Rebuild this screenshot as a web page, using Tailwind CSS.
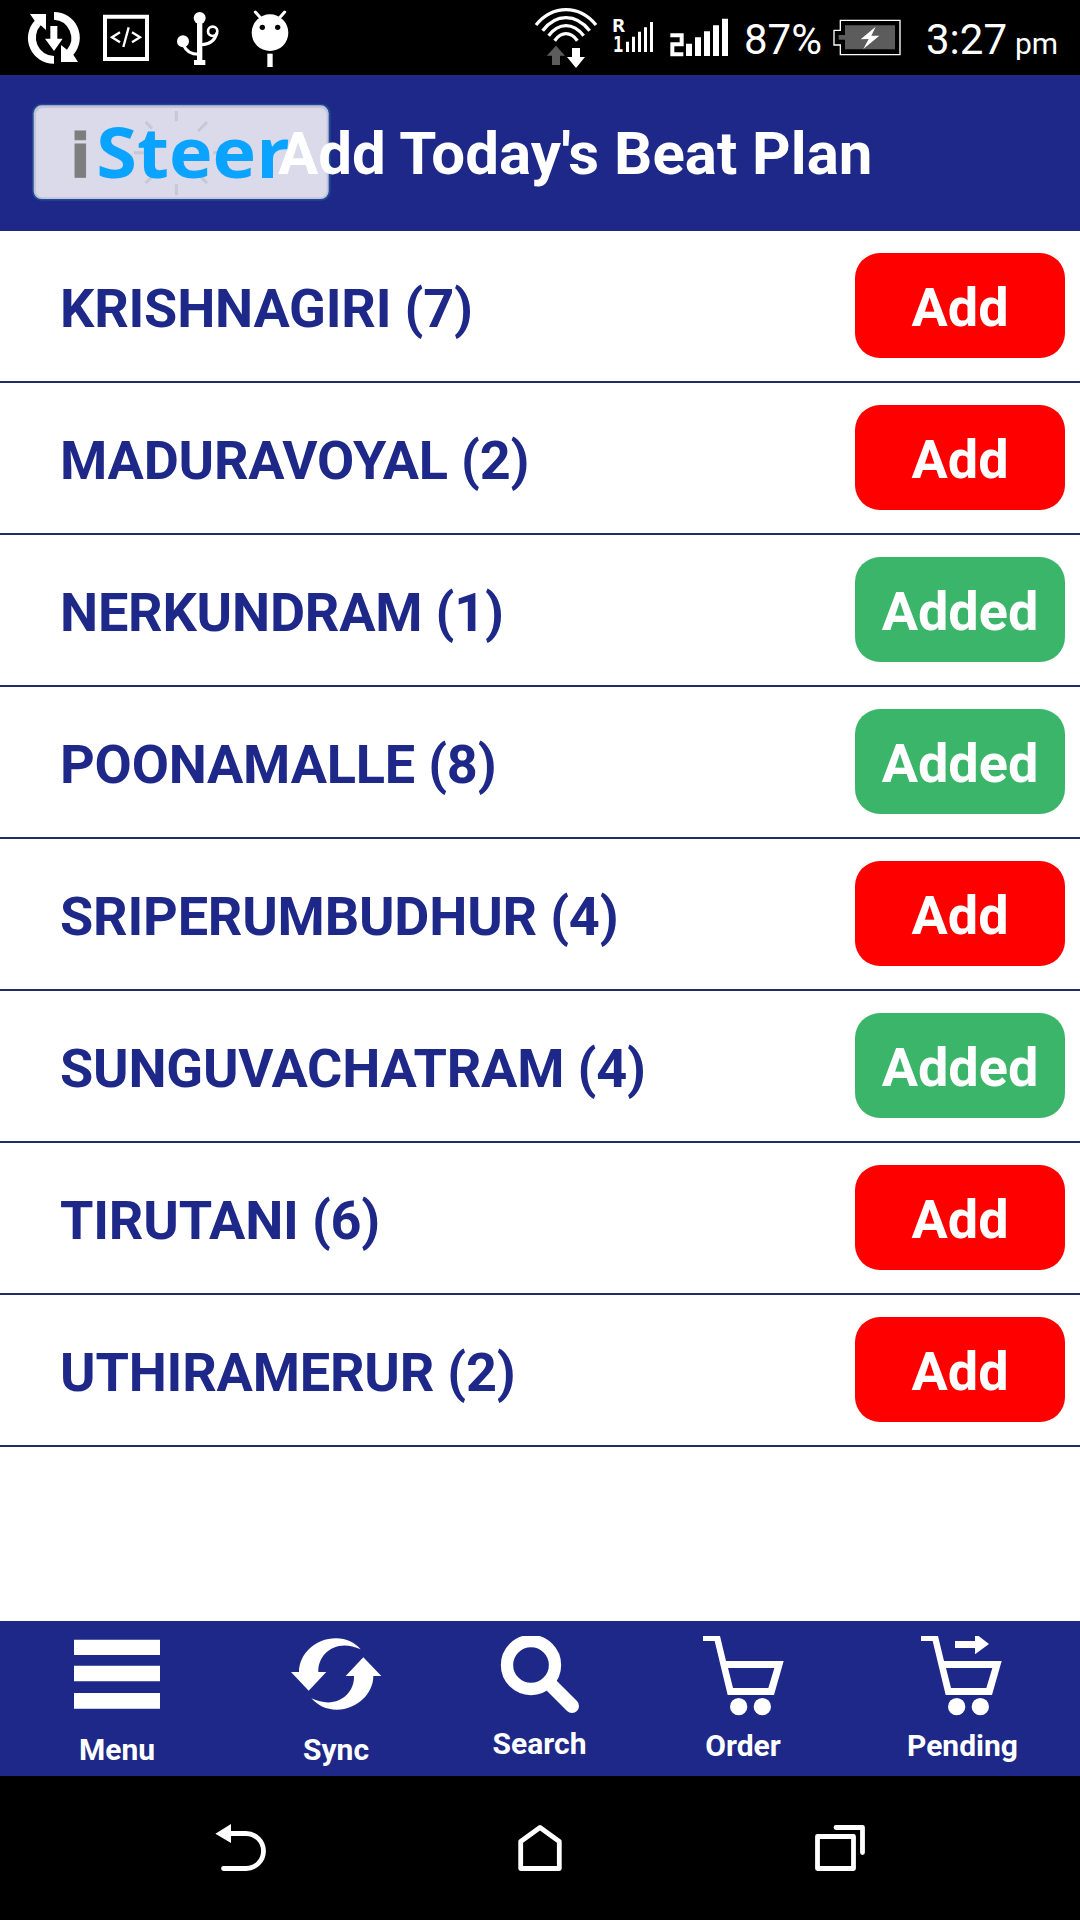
<!DOCTYPE html>
<html lang="en">
<head>
    <meta charset="UTF-8">
    <meta name="viewport" content="width=device-width, initial-scale=1.0">
    <title>Add Today's Beat Plan</title>
    <script src="https://cdn.jsdelivr.net/npm/@tailwindcss/browser@4"></script>
</head>
<body class="bg-white font-[Roboto,sans-serif]">
    <div class="w-[1080px] h-[1920px] flex flex-col overflow-hidden">
        <!-- Status bar -->
        <div class="h-[75px] shrink-0 bg-black text-white flex overflow-hidden">
            <svg class="w-[320px] h-[75px] shrink-0" viewBox="0 0 960 225" fill="#fff">
                <!-- download sync -->
                <path d="M162 36A77 77 0 0 1 220 164L234 186H183V135L201 149A55 55 0 0 0 162 59Z"/>
                <path d="M162 191A77 77 0 0 1 104 62L90 42H138V90L122 76A55 55 0 0 0 162 168Z"/>
                <path d="M151 78H172V116H188L162 153L135 116H151Z"/>
                <!-- code -->
                <path d="M315 50H441V177H315Z" fill="none" stroke="#fff" stroke-width="12"/>
                <path d="M360 97L336 112L360 127M396 97L420 112L396 127" fill="none" stroke="#fff" stroke-width="7"/>
                <path d="M386 82L370 141" fill="none" stroke="#fff" stroke-width="7"/>
                <!-- usb -->
                <circle cx="599" cy="54" r="18"/>
                <circle cx="549" cy="124" r="18"/>
                <path d="M591 60H607V180H616V195H582V180H591Z"/>
                <circle cx="638" cy="94" r="14" fill="none" stroke="#fff" stroke-width="8"/>
                <path d="M551 136Q563 164 598 163M604 134Q642 134 651 98" fill="none" stroke="#fff" stroke-width="9"/>
                <!-- android -->
                <circle cx="810" cy="98" r="55"/>
                <path d="M766 36L784 56M854 36L836 56" stroke="#fff" stroke-width="9" stroke-linecap="round"/>
                <circle cx="787" cy="82" r="8" fill="#000"/>
                <circle cx="833" cy="82" r="8" fill="#000"/>
                <path d="M802 161H818V201H802Z"/>
            </svg>
            <svg class="ml-[200px] w-[220px] h-[75px] shrink-0" viewBox="0 0 660 225" fill="#fff">
                <!-- wifi -->
                <g fill="none" stroke="#fff" stroke-width="10">
                    <path d="M48 75Q86 29 138 29T228 75"/>
                    <path d="M68 92Q98 53 138 53T209 92"/>
                    <path d="M86 107Q109 77 138 77T191 107"/>
                    <path d="M104 122Q119 101 138 101T172 122"/>
                </g>
                <path d="M108 137L135 167H120V195H96V167H80Z" fill="#5c5c5c"/>
                <path d="M156 144H180V171H195L168 204L141 171H156Z"/>
                <!-- sim 1 -->
                <text x="277" y="95" font-family="DejaVu Sans Mono" font-weight="700" font-size="54" textLength="38" lengthAdjust="spacingAndGlyphs">R</text>
                <text x="279" y="156" font-family="DejaVu Sans Mono" font-weight="700" font-size="66" textLength="31" lengthAdjust="spacingAndGlyphs">1</text>
                <path d="M318 125H327V156H318ZM336 110H345V156H336ZM354 95H363V156H354ZM372 82H381V156H372ZM390 66H399V156H390Z"/>
                <!-- sim 2 -->
                <path d="M451 106H485V133H457V163H490" fill="none" stroke="#fff" stroke-width="12"/>
                <path d="M498 131H516V168H498ZM525 112H543V168H525ZM552 94H570V168H552ZM579 76H597V168H579ZM606 56H624V168H606Z"/>
            </svg>
            <div class="ml-[4px] mt-[16px] w-[84px] text-[42px] leading-[48px] shrink-0">87%</div>
            <svg class="w-[92px] h-[75px] shrink-0" viewBox="144 0 276 225">
                <path d="M181 61H360V164H181V135H162V91H181Z" fill="none" stroke="#fff" stroke-width="4"/>
                <path d="M195 76H345V148H195V119H176V105H195Z" fill="#5c5c5c"/>
                <path d="M287 80L242 118L266 117L250 147L298 107L274 107Z" fill="#fff"/>
            </svg>
            <div class="ml-[6px] mt-[16px] text-[42px] leading-[48px] whitespace-nowrap">3:27<span class="ml-[8px] text-[30px]">pm</span></div>
        </div>

        <!-- Title bar -->
        <header class="h-[156px] shrink-0 bg-[#1e2888] flex">
            <svg class="w-[335px] h-[156px] shrink-0" viewBox="0 -3 1005 468">
                <rect x="96" y="83" width="896" height="291" rx="28" fill="#1d4a90"/>
                <rect x="101" y="88" width="885" height="281" rx="24" fill="#c3c3dc"/>
                <rect x="108" y="96" width="872" height="268" rx="20" fill="#dadaea"/>
                <g stroke="#c6c8d2" stroke-width="9">
                    <path d="M529 105V136M529 325V358M437 138L456 157M621 138L594 166M437 321L456 303M621 321L603 303M402 230H432M640 230H660"/>
                </g>
                <text x="210" y="303" font-family="DejaVu Sans" font-weight="700" font-size="183" fill="#7d7d7d" stroke="#7d7d7d" stroke-width="3" textLength="62" lengthAdjust="spacingAndGlyphs">i</text>
                <text x="289" y="305" font-family="Open Sans" font-weight="700" font-size="212" fill="#0aa3ff" textLength="580" lengthAdjust="spacingAndGlyphs">Steer</text>
            </svg>
            <h1 class="relative -ml-[57px] mt-[43px] text-white text-[60px] leading-[72px] font-bold whitespace-nowrap">Add Today's Beat Plan</h1>
        </header>

        <!-- Beat list -->
        <main class="flex-1 text-[54px] leading-[64px] font-bold text-[#1e2888]">
            <div class="h-[152px] border-b-2 border-[#232c66] flex items-center justify-between pl-[60px] pr-[15px]">
                <div class="pt-[5px] tracking-[-0.2px]">KRISHNAGIRI (7)</div>
                <button class="w-[210px] h-[105px] mb-[2px] rounded-[25px] bg-[#fe0000] text-white pt-[6px]">Add</button>
            </div>
            <div class="h-[152px] border-b-2 border-[#232c66] flex items-center justify-between pl-[60px] pr-[15px]">
                <div class="pt-[5px] tracking-[-0.2px]">MADURAVOYAL (2)</div>
                <button class="w-[210px] h-[105px] mb-[2px] rounded-[25px] bg-[#fe0000] text-white pt-[6px]">Add</button>
            </div>
            <div class="h-[152px] border-b-2 border-[#232c66] flex items-center justify-between pl-[60px] pr-[15px]">
                <div class="pt-[5px] tracking-[-0.2px]">NERKUNDRAM (1)</div>
                <button class="w-[210px] h-[105px] mb-[2px] rounded-[25px] bg-[#3bb569] text-white pt-[6px]">Added</button>
            </div>
            <div class="h-[152px] border-b-2 border-[#232c66] flex items-center justify-between pl-[60px] pr-[15px]">
                <div class="pt-[5px] tracking-[-0.2px]">POONAMALLE (8)</div>
                <button class="w-[210px] h-[105px] mb-[2px] rounded-[25px] bg-[#3bb569] text-white pt-[6px]">Added</button>
            </div>
            <div class="h-[152px] border-b-2 border-[#232c66] flex items-center justify-between pl-[60px] pr-[15px]">
                <div class="pt-[5px] tracking-[-0.2px]">SRIPERUMBUDHUR (4)</div>
                <button class="w-[210px] h-[105px] mb-[2px] rounded-[25px] bg-[#fe0000] text-white pt-[6px]">Add</button>
            </div>
            <div class="h-[152px] border-b-2 border-[#232c66] flex items-center justify-between pl-[60px] pr-[15px]">
                <div class="pt-[5px] tracking-[-0.2px]">SUNGUVACHATRAM (4)</div>
                <button class="w-[210px] h-[105px] mb-[2px] rounded-[25px] bg-[#3bb569] text-white pt-[6px]">Added</button>
            </div>
            <div class="h-[152px] border-b-2 border-[#232c66] flex items-center justify-between pl-[60px] pr-[15px]">
                <div class="pt-[5px] tracking-[-0.2px]">TIRUTANI (6)</div>
                <button class="w-[210px] h-[105px] mb-[2px] rounded-[25px] bg-[#fe0000] text-white pt-[6px]">Add</button>
            </div>
            <div class="h-[152px] border-b-2 border-[#232c66] flex items-center justify-between pl-[60px] pr-[15px]">
                <div class="pt-[5px] tracking-[-0.2px]">UTHIRAMERUR (2)</div>
                <button class="w-[210px] h-[105px] mb-[2px] rounded-[25px] bg-[#fe0000] text-white pt-[6px]">Add</button>
            </div>
        </main>

        <!-- Bottom menu -->
        <footer class="h-[155px] shrink-0 bg-[#1e2888] text-white text-center text-[30px] leading-[36px] font-bold grid grid-cols-[234px_204px_203px_204px_235px]">
            <div>
                <svg class="w-full h-[95px]" viewBox="-120 33 702 285" fill="#fff">
                    <path d="M102 89H360V135H102ZM102 167H360V214H102ZM102 249H360V296H102Z"/>
                </svg>
                <div class="mt-[16px]">Menu</div>
            </div>
            <div>
                <svg class="w-full h-[95px]" viewBox="582 33 612 285" fill="#fff">
                    <path d="M962 118C944 98 920 85 888 85C825 85 777 133 777 186H753L806 242L859 186H835C833 130 890 84 962 118Z"/>
                    <path d="M814 265C834 287 858 299 890 299C952 299 1000 250 1000 198H1024L970 142L917 198H942C944 254 887 300 814 265Z"/>
                </svg>
                <div class="mt-[16px]">Sync</div>
            </div>
            <div>
                <svg class="w-full h-[95px]" viewBox="-66 33 609 285" fill="none" stroke="#fff">
                    <clipPath id="lensTop"><path d="M100 78H380V320H100Z"/></clipPath>
                    <g clip-path="url(#lensTop)">
                        <circle cx="213" cy="165" r="72" stroke-width="37"/>
                        <path d="M270 222L336 288" stroke-width="42" stroke-linecap="round"/>
                    </g>
                </svg>
                <div class="mt-[10px]">Search</div>
            </div>
            <div>
                <svg class="w-full h-[95px]" viewBox="543 33 612 285" fill="#fff">
                    <path fill-rule="evenodd" d="M729 78H780L798 153H971L942 255H803L764 93H729ZM804 174L819 234H925L943 174Z"/>
                    <circle cx="836" cy="290" r="26"/>
                    <circle cx="907" cy="290" r="26"/>
                </svg>
                <div class="mt-[12px]">Order</div>
            </div>
            <div>
                <svg class="w-full h-[95px]" viewBox="-45 33 705 285" fill="#fff">
                    <path fill-rule="evenodd" d="M183 78H234L252 153H425L396 255H257L218 93H183ZM258 174L273 234H379L397 174Z"/>
                    <circle cx="290" cy="290" r="26"/>
                    <circle cx="361" cy="290" r="26"/>
                    <path d="M285 93H345V78L356 78L387 102L345 133V114H285Z"/>
                </svg>
                <div class="mt-[12px]">Pending</div>
            </div>
        </footer>

        <!-- System navigation -->
        <nav class="h-[144px] shrink-0 bg-black grid grid-cols-[390px_300px_390px]">
            <svg class="w-full h-[144px]" viewBox="0 0 390 144">
                <path d="M215.4 57.7L231 48V67Z" fill="#fff"/>
                <path d="M229 57.5H246A17.5 17.5 0 0 1 246 92.5H223.5" fill="none" stroke="#fff" stroke-width="4.8" stroke-linecap="round"/>
            </svg>
            <svg class="w-full h-[144px]" viewBox="390 0 300 144">
                <path d="M540 51.5L559.3 65.5V92.5H520.7V65.5Z" fill="none" stroke="#fff" stroke-width="4.8" stroke-linejoin="round"/>
            </svg>
            <svg class="w-full h-[144px]" viewBox="690 0 390 144">
                <path d="M817.5 60.5H853.5V92.5H817.5ZM836 51.5H862.5V76.5" fill="none" stroke="#fff" stroke-width="4.8" stroke-linejoin="round" stroke-linecap="round"/>
            </svg>
        </nav>
    </div>
</body>
</html>
